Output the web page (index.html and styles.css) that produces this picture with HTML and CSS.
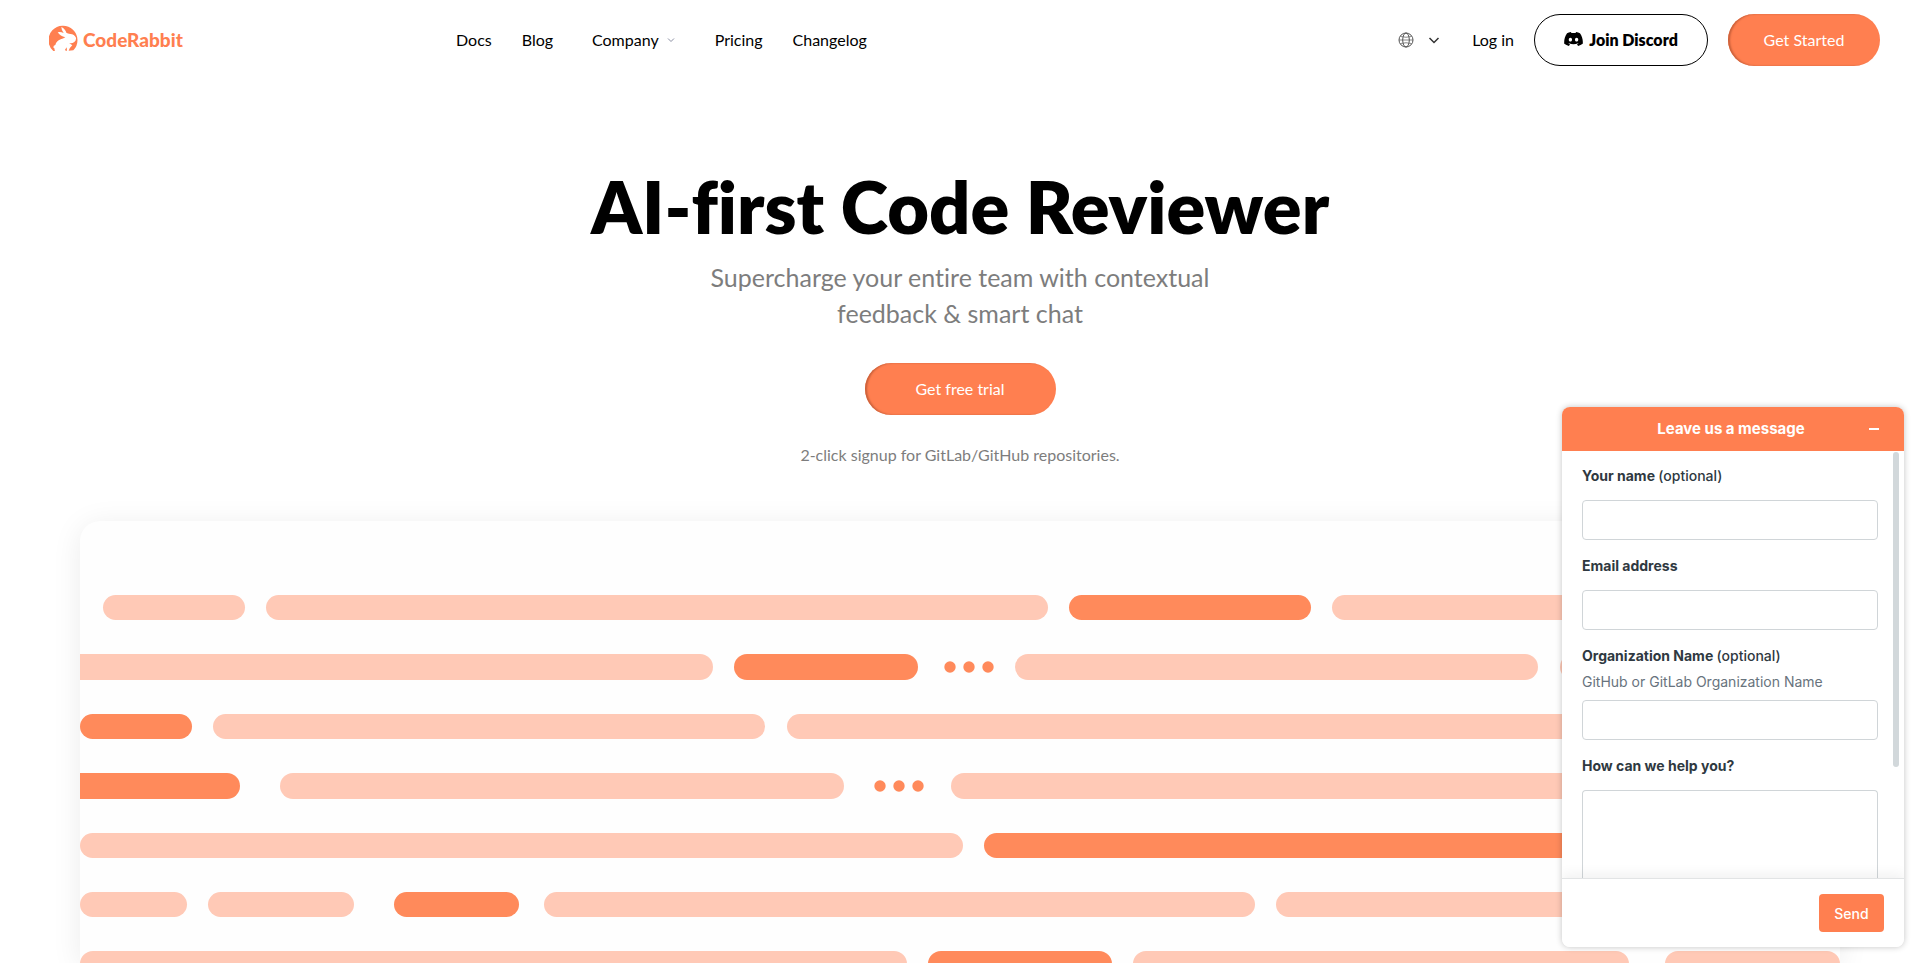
FILE: index.html
```html
<!DOCTYPE html>
<html lang="en">
<head>
<meta charset="utf-8">
<meta name="viewport" content="width=device-width, initial-scale=1">
<title>CodeRabbit</title>
<link rel="stylesheet" href="styles.css">
</head>
<body class="page">
<header class="header">
  <a class="brand" href="#">
    <svg class="brand-mark" viewBox="0 0 87 78" aria-hidden="true">
      <path fill="#ff7f50" d="M13 78A43.500 43.500 0 1 1 73 76L59 77Q62 68 70 61Q64 56 60 54Q68 57 76 51Q82 46 81 38Q76 28 64 27Q56 26 52 23Q49 12 37 6Q37 15 44 24Q34 19 26 22Q34 34 49 37Q42 41 35 43Q22 48 19 60Q13 61 13 67Q14 70 17 71Q16 75 18 78Z"/>
      <path fill="#ff7f50" d="M48 74l5-7 1 10h-4z"/>
    </svg>
    <span class="brand-name">CodeRabbit</span>
  </a>
  <nav class="nav" aria-label="Main">
    <a class="nav-link" href="#">Docs</a>
    <a class="nav-link" href="#">Blog</a>
    <button class="nav-link nav-menu" type="button">Company
      <svg class="nav-caret" viewBox="0 0 8 8" aria-hidden="true"><path d="M1 2.500l3 3 3-3" fill="none" stroke="#8b8fa3"/></svg>
    </button>
    <a class="nav-link" href="#">Pricing</a>
    <a class="nav-link" href="#">Changelog</a>
  </nav>
  <div class="actions">
    <button class="language" type="button" aria-label="Language">
      <svg class="globe" viewBox="0 0 16 16" fill="none" stroke="#555" aria-hidden="true"><circle cx="8" cy="8" r="7"/><ellipse cx="8" cy="8" rx="3.300" ry="7"/><path d="M1 8h14M2.500 4.500q5.500 1.500 11 0M2.500 11.500q5.500-1.500 11 0" stroke-width=".7"/></svg>
      <svg class="caret" viewBox="0 0 12 12" fill="none" stroke="#333" stroke-width="1.500" aria-hidden="true"><path d="M1.500 4l4.500 4.500L10.500 4"/></svg>
    </button>
    <a class="nav-link" href="#">Log in</a>
    <a class="button button-outline" href="#">
      <svg class="discord" viewBox="0 0 24 18" aria-hidden="true"><path fill-rule="evenodd" d="M20.300 1.500A20 20 0 0 0 15.400 0l-.8 1.400a18 18 0 0 0-5.200 0L8.600 0a20 20 0 0 0-4.900 1.500C.6 6.100-.3 10.600.1 15a20 20 0 0 0 6 3l1.400-2.100-2-1 .5-.4a14.300 14.300 0 0 0 12 0l.5.400-2 1 1.400 2.100a20 20 0 0 0 6-3c.5-5.100-.8-9.600-3.600-13.500zM8 12.300c-1.200 0-2.100-1.100-2.100-2.400S6.800 7.500 8 7.500s2.200 1.100 2.100 2.400c0 1.300-.9 2.400-2.100 2.400zm8 0c-1.200 0-2.100-1.100-2.100-2.400s.9-2.400 2.100-2.400 2.200 1.100 2.100 2.400c0 1.300-.9 2.400-2.100 2.400z"/></svg>
      Join Discord
    </a>
    <a class="button button-primary" href="#">Get Started</a>
  </div>
</header>

<main class="hero">
  <h1 class="hero-title">AI-first Code Reviewer</h1>
  <p class="hero-lead">Supercharge your entire team with contextual feedback &amp; smart chat</p>
  <a class="button button-primary button-trial" href="#">Get free trial</a>
  <p class="hero-note">2-click signup for GitLab/GitHub repositories.</p>
  <div class="showcase">
    <svg class="code-art" viewBox="0 0 1760 990" preserveAspectRatio="xMidYMin slice" role="img" aria-label="Abstract lines of code">
      <g fill="#ffc9b6">
        <rect x="23" y="74" width="142" height="25" rx="12.500"/>
        <rect x="186" y="74" width="782" height="25" rx="12.500"/>
        <rect x="1252" y="74" width="420" height="25" rx="12.500"/>
        <rect x="-30" y="133" width="663" height="26" rx="13"/>
        <rect x="935" y="133" width="523" height="26" rx="13"/>
        <rect x="1480" y="133" width="320" height="26" rx="13"/>
        <rect x="133" y="193" width="552" height="25" rx="12.500"/>
        <rect x="707" y="193" width="1000" height="25" rx="12.500"/>
        <rect x="200" y="252" width="564" height="26" rx="13"/>
        <rect x="871" y="252" width="830" height="26" rx="13"/>
        <rect x="0" y="312" width="883" height="25" rx="12.500"/>
        <rect x="0" y="371" width="107" height="25" rx="12.500"/>
        <rect x="128" y="371" width="146" height="25" rx="12.500"/>
        <rect x="464" y="371" width="711" height="25" rx="12.500"/>
        <rect x="1196" y="371" width="500" height="25" rx="12.500"/>
        <rect x="0" y="430" width="827" height="26" rx="13"/>
        <rect x="1053" y="430" width="496" height="26" rx="13"/>
        <rect x="1585" y="430" width="175" height="26" rx="13"/>
      </g>
      <g fill="#ff8a5b">
        <rect x="989" y="74" width="242" height="25" rx="12.500"/>
        <rect x="654" y="133" width="184" height="26" rx="13"/>
        <circle cx="870" cy="146" r="5.700"/><circle cx="889" cy="146" r="5.700"/><circle cx="908" cy="146" r="5.700"/>
        <rect x="0" y="193" width="112" height="25" rx="12.500"/>
        <rect x="-30" y="252" width="190" height="26" rx="13"/>
        <circle cx="800" cy="265" r="5.700"/><circle cx="819" cy="265" r="5.700"/><circle cx="838" cy="265" r="5.700"/>
        <rect x="904" y="312" width="760" height="25" rx="12.500"/>
        <rect x="314" y="371" width="125" height="25" rx="12.500"/>
        <rect x="848" y="430" width="184" height="26" rx="13"/>
      </g>
    </svg>
  </div>
</main>

<form class="widget" aria-label="Leave us a message">
  <div class="widget-head">
    <h2 class="widget-title">Leave us a message</h2>
    <button class="widget-minimize" type="button" aria-label="Minimize"><span class="minus"></span></button>
  </div>
  <div class="widget-body">
    <div class="field">
      <label class="field-label" for="name">Your name <span class="optional">(optional)</span></label>
      <input class="field-input" id="name" type="text">
    </div>
    <div class="field">
      <label class="field-label" for="email">Email address</label>
      <input class="field-input" id="email" type="email">
    </div>
    <div class="field field-hinted">
      <label class="field-label" for="org">Organization Name <span class="optional">(optional)</span></label>
      <span class="field-hint" id="org-hint">GitHub or GitLab Organization Name</span>
      <input class="field-input" id="org" type="text" aria-describedby="org-hint">
    </div>
    <div class="field field-grow">
      <label class="field-label" for="help">How can we help you?</label>
      <textarea class="field-input field-area" id="help"></textarea>
    </div>
    <div class="scroll-thumb"></div>
  </div>
  <div class="widget-foot"><button class="send" type="submit">Send</button></div>
</form>
</body>
</html>
```
FILE: styles.css
```css
* { box-sizing: border-box; }

.page {
  margin: 0;
  height: 100vh;
  overflow: hidden;
  display: flex;
  flex-direction: column;
  background: #fff;
  color: #000;
  font-family: Lato, "Open Sans", sans-serif;
  font-size: 16px;
  font-variant-ligatures: none;
}

button { font: inherit; color: inherit; border: 0; background: none; padding: 0; cursor: pointer; }
a { color: inherit; text-decoration: none; }

.header {
  flex: none;
  display: grid;
  grid-template-columns: 407px 1fr auto;
  align-items: center;
  padding: 14px 40px 14px 49px;
}
.brand { display: flex; align-items: center; gap: 5px; color: #ff7f50; }
.brand-mark { width: 29px; height: 30px; padding-bottom: 4px; }
.brand-name { font-size: 19px; font-weight: 900; line-height: 24px; }

.nav { display: flex; align-items: center; gap: 30px; }
.nav-link { font-size: 16px; line-height: 24px; white-space: nowrap; }
.nav-menu { display: flex; align-items: center; gap: 8px; margin: 0 10px 0 9px; }
.nav-caret { width: 8px; height: 8px; }

.actions { display: flex; align-items: center; gap: 20px; }
.language { display: flex; align-items: center; gap: 14px; margin-right: 12px; }
.globe { width: 16px; height: 16px; }
.caret { width: 12px; height: 12px; }

.button {
  display: inline-flex;
  align-items: center;
  justify-content: center;
  gap: 6px;
  height: 52px;
  padding-bottom: 2px;
  border-radius: 26px;
  font-size: 16px;
  white-space: nowrap;
}
.button-outline { width: 174px; border: 1px solid #000; font-weight: 800; }
.discord { width: 19px; height: 14px; }
.button-primary {
  width: 152px;
  background: #ff7f50;
  color: #fff;
  box-shadow: inset 2px 0 2px #c9603a;
}
.button-trial { width: 191px; flex: none; }

.hero {
  flex: 1;
  min-height: 0;
  display: flex;
  flex-direction: column;
  align-items: center;
  padding: 81px 80px 0;
  text-align: center;
}
.hero-title { margin: 0 0 8px; font-size: 72px; line-height: 90px; font-weight: 800; }
.hero-lead { margin: 0 0 32px; max-width: 560px; font-size: 25px; line-height: 36px; color: #7d7d7d; }
.hero-note { margin: 28px 0 54px; line-height: 24px; color: #7d7d7d; }
.showcase {
  flex: 1;
  min-height: 0;
  width: 100%;
  border-radius: 20px 20px 0 0;
  background: #fefefe;
  box-shadow: 0 4px 30px rgba(0, 0, 0, 0.08);
}
.code-art { display: block; width: 100%; height: 100%; }

.widget {
  position: absolute;
  right: 16px;
  bottom: 16px;
  width: 342px;
  height: 540px;
  display: flex;
  flex-direction: column;
  overflow: hidden;
  border-radius: 8px;
  background: #fff;
  color: #2f3941;
  font-family: Inter, sans-serif;
  font-size: 14px;
  box-shadow: 0 0 6px rgba(0, 0, 0, 0.24);
}
.widget-head {
  flex: none;
  display: grid;
  grid-template-columns: 1fr auto 1fr;
  align-items: center;
  height: 44px;
  padding: 0 22px 0 18px;
  background: #ff7f50;
  color: #fff;
}
.widget-title { grid-column: 2; margin: 0; font-size: 15px; line-height: 20px; font-weight: 700; }
.widget-minimize { justify-self: end; width: 16px; height: 20px; display: grid; place-items: center; }
.minus { width: 10px; height: 2px; background: #fff; }

.widget-body {
  position: relative;
  flex: 1;
  min-height: 0;
  overflow: hidden;
  padding: 15px 26px 0 20px;
  display: flex;
  flex-direction: column;
  gap: 16px;
}
.field { flex: none; display: flex; flex-direction: column; gap: 14px; }
.field-grow { flex: 1; min-height: 0; }
.field-label { font-weight: 700; line-height: 20px; }
.optional { font-weight: 500; }
.field-hinted { gap: 6px; }
.field-hint { line-height: 20px; color: #68737d; }
.field-hinted .field-input { margin-top: 2px; }
.field-input {
  width: 100%;
  height: 40px;
  padding: 0 12px;
  border: 1px solid #d0d5d8;
  border-radius: 4px;
  background: #fff;
  font: inherit;
}
.field-area {
  flex: 1;
  height: auto;
  min-height: 0;
  padding: 10px 12px;
  border-bottom: 0;
  border-radius: 4px 4px 0 0;
  resize: none;
}
.scroll-thumb {
  position: absolute;
  top: 1px;
  right: 5px;
  width: 6px;
  height: 315px;
  border-radius: 3px;
  background: #d2d8db;
}
.widget-foot {
  position: relative;
  flex: none;
  display: flex;
  justify-content: flex-end;
  padding: 15px 20px;
  border-top: 1px solid #e2e4e5;
  background: #fff;
  box-shadow: 0 -4px 12px rgba(0, 0, 0, 0.06);
}
.send {
  width: 65px;
  height: 38px;
  border-radius: 4px;
  background: #ff7f50;
  color: #fff;
  font-weight: 500;
}
```
